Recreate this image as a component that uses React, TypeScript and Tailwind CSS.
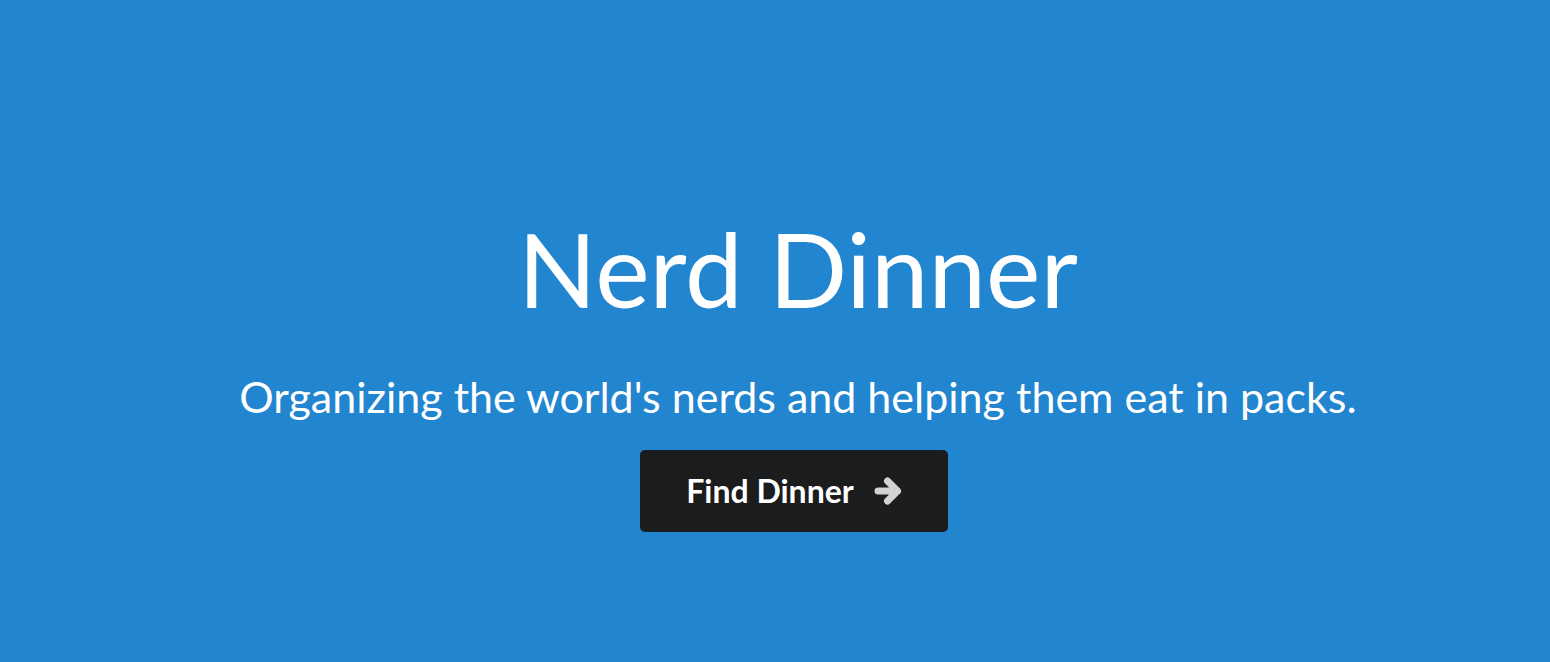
export default function App() {
  return (
    <div className="h-[662px] w-full bg-[#2185d0] flex flex-col items-center pt-[217px] pl-[46px] font-['Lato',sans-serif] text-white">
      <h1 className="text-[103px] leading-none font-normal">Nerd Dinner</h1>
      <h2 className="mt-[55px] text-[43px] leading-none font-normal">
        Organizing the world's nerds and helping them eat in packs.
      </h2>
      <button className="mt-[32px] mr-[8px] w-[308px] h-[82px] rounded-[5px] bg-[#1b1c1d] flex items-center justify-center gap-[20px] text-[32px] font-bold">
        Find Dinner
        <svg
          viewBox="0 0 28 28"
          className="w-[28px] h-[28px] text-white/80"
          fill="none"
          stroke="currentColor"
          strokeWidth={7}
          strokeLinecap="round"
          strokeLinejoin="round"
        >
          <path d="M4 14H23.5M13.5 4L23.5 14L13.5 24" />
        </svg>
      </button>
    </div>
  );
}
